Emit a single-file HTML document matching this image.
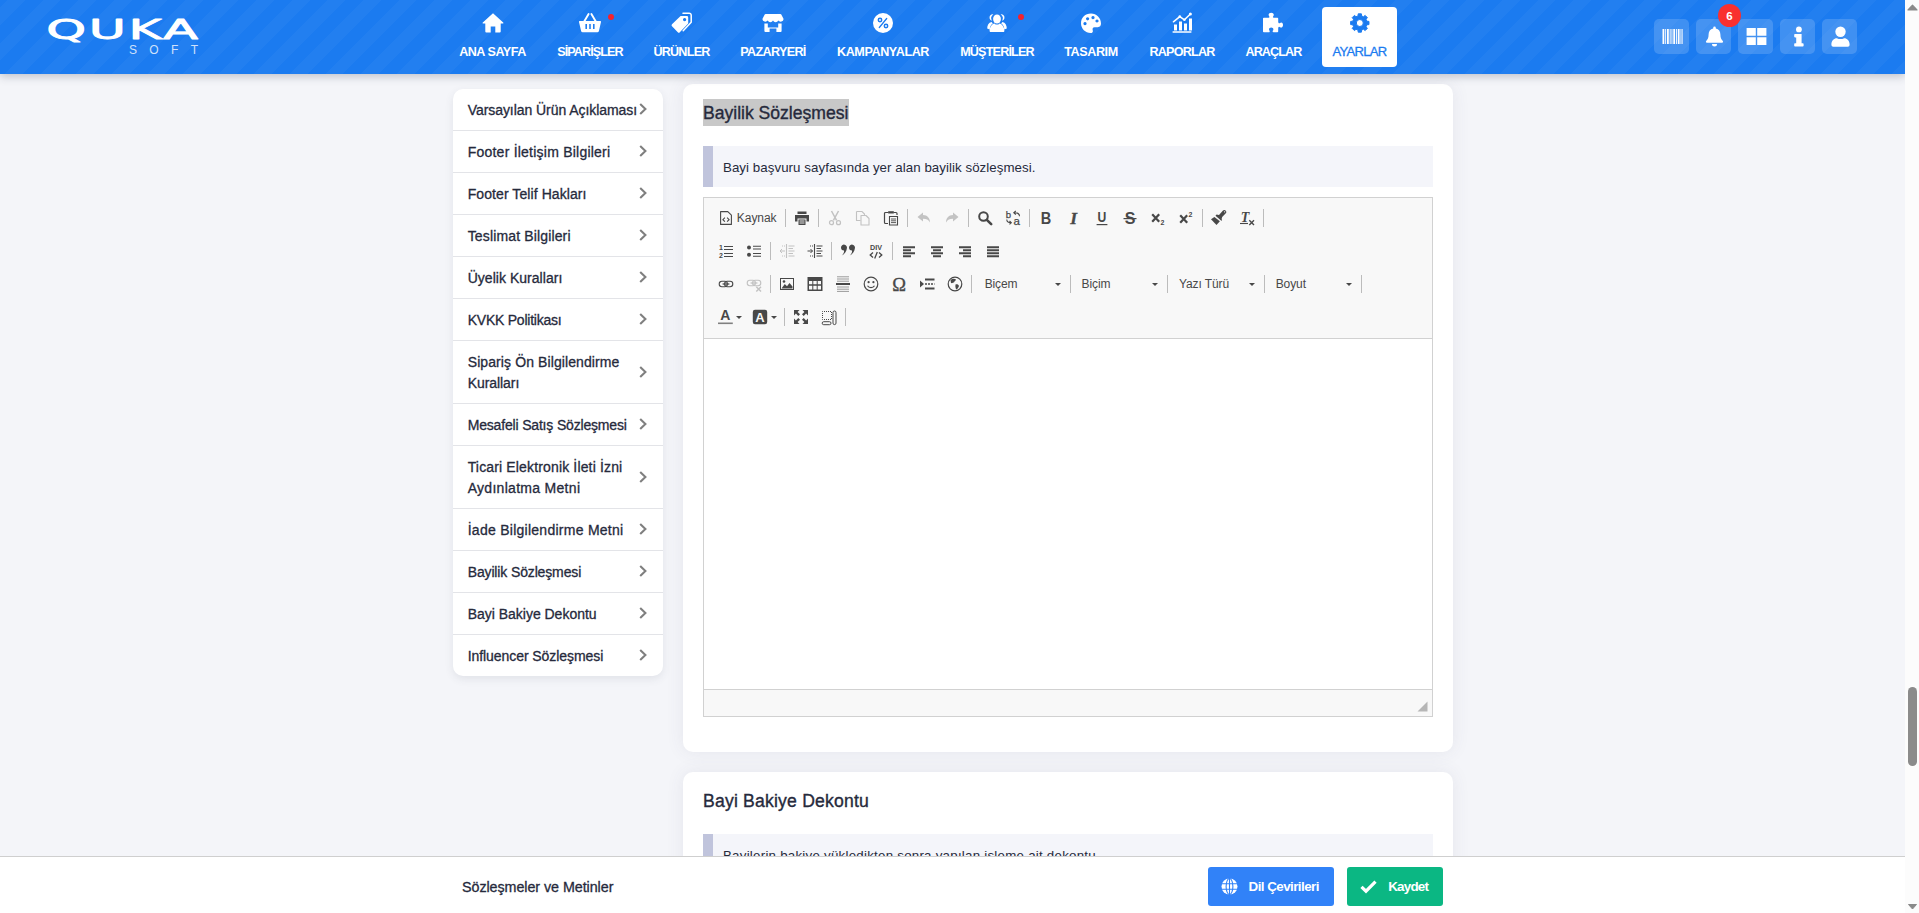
<!DOCTYPE html>
<html lang="tr">
<head>
<meta charset="utf-8">
<title>Sözleşmeler ve Metinler</title>
<style>
*{box-sizing:border-box;margin:0;padding:0}
html,body{width:1919px;height:913px;overflow:hidden}
body{background:#f4f5f9;font-family:"Liberation Sans",sans-serif;color:#262a3c;position:relative}
#page{position:absolute;left:0;top:0;width:1919px;height:913px;overflow:hidden}
.abs{position:absolute}
/* header */
#hdr{position:absolute;left:0;top:0;width:1905px;height:74px;background-color:#1b7bf0;
 background-image:repeating-linear-gradient(135deg,rgba(255,255,255,0) 0,rgba(255,255,255,0) 5.300px,rgba(255,255,255,0.032) 5.300px,rgba(255,255,255,0.032) 17.900px,rgba(255,255,255,0) 17.900px,rgba(255,255,255,0) 25.170px);
 box-shadow:0 2px 9px rgba(40,45,70,0.28)}
.nav{position:absolute;top:7px;height:60px;border-radius:4px;color:#fff;text-align:center}
.nav svg{position:absolute;left:50%;top:4px;margin-left:-12px;width:24px;height:24px;fill:#fff}
.nav span{position:absolute;left:-20px;right:-20px;top:37px;font-size:12.6px;line-height:16px;font-weight:bold;letter-spacing:-0.35px;white-space:nowrap}
.nav.act{background:#fff;color:#1b7bf0}
.nav.act svg{fill:#1b7bf0}
.dot{position:absolute;width:6px;height:6px;border-radius:3px;background:#f5222d}
.rb{position:absolute;top:19px;width:35px;height:35px;border-radius:5px;background:rgba(255,255,255,0.16)}
.rb svg{position:absolute;left:7.700px;top:7.300px;width:21px;height:21px;fill:#fff}
/* sidebar */
#side{position:absolute;left:453px;top:89px;width:210px;background:#fff;border-radius:10px;box-shadow:0 3px 8px rgba(60,65,90,0.10);overflow:hidden}
.si{position:relative;padding:11px 30px 9px 14.700px;font-size:14px;line-height:21px;border-bottom:1px solid #e3e4e8;white-space:nowrap;-webkit-text-stroke:0.3px #262a3c}
.si:last-child{border-bottom:0}
.si svg{position:absolute;right:16.300px;top:50%;margin-top:-6.500px;width:8px;height:12px;fill:none;stroke:#808080;stroke-width:2.100}
/* cards */
.card{position:absolute;left:683px;width:770px;background:#fff;border-radius:10px;box-shadow:0 0 18px rgba(70,65,100,0.085)}
.ttl{position:absolute;left:703px;font-size:17.6px;line-height:27px;height:27px;white-space:nowrap;-webkit-text-stroke:0.35px #262a3c;color:#262a3c}
.info{position:absolute;left:703px;width:730px;height:41px;background:#f4f5fa;border-left:10px solid #c0c4dc;font-size:13.300px;line-height:43px;padding-left:10px;overflow:hidden;white-space:nowrap;color:#262a3c}
.ti{position:absolute;width:16px;height:16px;overflow:visible}
.ti.dis{opacity:0.3}
.tsep{position:absolute;width:1px;height:18px;background:#bcbcbc}
.tarr{position:absolute;width:0;height:0;border-left:3px solid transparent;border-right:3px solid transparent;border-top:3px solid #484848}
.tlbl{position:absolute;font-size:12px;line-height:16px;color:#484848;white-space:nowrap}
/* footer */
#foot{position:absolute;left:0;top:856px;width:1905px;height:57px;background:#fff;border-top:1px solid #cfcfcf}
.btn{position:absolute;top:10px;height:39px;border-radius:3px;color:#fff;font-size:13.4px;font-weight:bold;line-height:40px;white-space:nowrap;letter-spacing:-0.300px}
/* scrollbar */
#sb{position:absolute;left:1905px;top:0;width:14px;height:913px;background:#fcfcfc}
</style>
</head>
<body>
<div id="page">

<!-- CARDS -->
<div class="card" style="top:84px;height:668px"></div>
<div class="card" style="top:772px;height:140px"></div>

<!--MAIN-->
<div class="abs" style="left:703px;top:99px;width:146px;height:27px;background:#c8c8c8"></div>
<div class="ttl" style="top:100px"><span style="letter-spacing:-0.017px">Bayilik Sözleşmesi</span></div>
<div class="info" style="top:146px"><span style="letter-spacing:0.055px">Bayi başvuru sayfasında yer alan bayilik sözleşmesi.</span></div>

<div id="ed" class="abs" style="left:703px;top:197px;width:730px;height:520px;border:1px solid #d1d1d1;background:#fff">
 <div id="tb" class="abs" style="left:0;top:0;width:728px;height:141px;background:#f8f8f8;border-bottom:1px solid #d1d1d1">
<!--TOOLBAR-->
<svg class="ti" style="left:14px;top:12px" viewBox="0 0 16 16"><path d="M2.600 1.600 h7.200 l3.600 3.600 v9.200 h-10.800 Z" fill="none" stroke="#484848" stroke-width="1.100" stroke-linejoin="round"/><path d="M6.900 7.700 l-2 2 l2 2 M9.100 7.700 l2 2 l-2 2" fill="none" stroke="#484848" stroke-width="1.100"/></svg>
<span class="tlbl" style="left:32.8px;top:12px"><span style="letter-spacing:-0.046px">Kaynak</span></span>
<i class="tsep" style="left:81px;top:11px"></i>
<svg class="ti" style="left:90px;top:12px" viewBox="0 0 16 16"><path d="M3.500 1.500 h9 v2.500 h-9 Z M1 5 h14 v6.500 h-2.500 v-3 h-9 v3 H1 Z M4.500 9.500 h7 v5.500 h-7 Z" fill="#484848"/><path d="M5.500 11 h5 M5.500 13 h5" stroke="#f8f8f8" stroke-width="0.900"/></svg>
<i class="tsep" style="left:114px;top:11px"></i>
<svg class="ti dis" style="left:123px;top:12px" viewBox="0 0 16 16"><path d="M4.500 1 L9.600 10.400 M11.500 1 L6.400 10.400" stroke="#484848" stroke-width="1.500" fill="none"/><circle cx="4.500" cy="12.700" r="2" fill="none" stroke="#484848" stroke-width="1.200"/><circle cx="11.500" cy="12.700" r="2" fill="none" stroke="#484848" stroke-width="1.200"/></svg>
<svg class="ti dis" style="left:151px;top:12px" viewBox="0 0 16 16"><path d="M1.500 1.500 h5.500 l2.500 2.500 v1 M1.500 1.500 v9 h4" fill="none" stroke="#484848" stroke-width="1.100"/><path d="M6 5.500 h5 l3 3 v6.500 h-8 Z" fill="none" stroke="#484848" stroke-width="1.100" stroke-linejoin="round"/></svg>
<svg class="ti" style="left:179px;top:12px" viewBox="0 0 16 16"><path d="M5.500 2.500 h-3 a1 1 0 0 0 -1 1 v9 a1 1 0 0 0 1 1 h2.500 M10.500 2.500 h2.500 a1 1 0 0 1 1 1 v1.500" fill="none" stroke="#484848" stroke-width="1.200"/><path d="M5.200 1.200 h5.600 v2.300 h-5.600 Z" fill="#484848"/><path d="M6.500 6.500 h8 v8.500 h-8 Z" fill="none" stroke="#484848" stroke-width="1.100"/><path d="M8 9 h5 M8 10.800 h5 M8 12.600 h5" stroke="#484848" stroke-width="0.900"/></svg>
<i class="tsep" style="left:203px;top:11px"></i>
<svg class="ti dis" style="left:212px;top:12px" viewBox="0 0 16 16"><path d="M7 2.500 L1.500 7 L7 11.500 V8.800 c3.500 0 5.500 1 7 3.700 c0 -4.500 -2.500 -7.300 -7 -7.500 Z" fill="#484848"/></svg>
<svg class="ti dis" style="left:240px;top:12px" viewBox="0 0 16 16"><path d="M9 2.500 L14.500 7 L9 11.500 V8.800 c-3.500 0 -5.500 1 -7 3.700 c0 -4.500 2.500 -7.300 7 -7.500 Z" fill="#484848"/></svg>
<i class="tsep" style="left:264px;top:11px"></i>
<svg class="ti" style="left:273px;top:12px" viewBox="0 0 16 16"><circle cx="6.500" cy="6.500" r="4.300" fill="none" stroke="#484848" stroke-width="2"/><path d="M9.800 9.800 L14.200 14.200" stroke="#484848" stroke-width="2.600" stroke-linecap="round"/></svg>
<svg class="ti" style="left:301px;top:12px" viewBox="0 0 16 16"><text x="0.800" y="7.500" font-family="Liberation Sans,sans-serif" font-size="9.500" fill="#484848" stroke="#484848" stroke-width="0.250">b</text><text x="8.500" y="15.300" font-family="Liberation Sans,sans-serif" font-size="11.500" fill="#484848" stroke="#484848" stroke-width="0.250">a</text><path d="M14.500 6.200 c0 -2.500 -1.500 -3.400 -5.500 -3.400 M10.800 1 l-2 1.800 l2 1.800 M1.800 9.500 c0 2.500 1 3.200 4.200 3.200 M4.500 11 l1.800 1.700 l-1.800 1.700" fill="none" stroke="#484848" stroke-width="1.100"/></svg>
<i class="tsep" style="left:325px;top:11px"></i>
<svg class="ti" style="left:334px;top:12px" viewBox="0 0 16 16"><text x="0" y="0" transform="translate(8,14) scale(0.880,1)" text-anchor="middle" font-family="Liberation Sans,sans-serif" font-size="16.500" font-weight="bold" fill="#484848">B</text></svg>
<svg class="ti" style="left:362px;top:12px" viewBox="0 0 16 16"><text x="7.600" y="14" text-anchor="middle" font-family="Liberation Serif,serif" font-size="17.500" font-weight="bold" font-style="italic" fill="#484848" stroke="#484848" stroke-width="0.300">I</text></svg>
<svg class="ti" style="left:390px;top:12px" viewBox="0 0 16 16"><text x="0" y="0" transform="translate(8,12.300) scale(0.900,1.100)" text-anchor="middle" font-family="Liberation Sans,sans-serif" font-size="13.500" font-weight="bold" fill="#484848">U</text><path d="M2.600 14.600 h10.800" stroke="#484848" stroke-width="1.200"/></svg>
<svg class="ti" style="left:418px;top:12px" viewBox="0 0 16 16"><text x="8" y="14" text-anchor="middle" font-family="Liberation Sans,sans-serif" font-size="16" font-weight="bold" fill="#484848">S</text><path d="M1.500 8.600 h13" stroke="#484848" stroke-width="1.200"/></svg>
<svg class="ti" style="left:446px;top:12px" viewBox="0 0 16 16"><path d="M2.200 4.200 L9.200 11.800 M9.200 4.200 L2.200 11.800" stroke="#484848" stroke-width="2.200"/><text x="10.500" y="15.200" font-family="Liberation Sans,sans-serif" font-size="7" font-weight="bold" fill="#484848">2</text></svg>
<svg class="ti" style="left:474px;top:12px" viewBox="0 0 16 16"><path d="M2.200 5.200 L9.200 12.800 M9.200 5.200 L2.200 12.800" stroke="#484848" stroke-width="2.200"/><text x="10.500" y="7" font-family="Liberation Sans,sans-serif" font-size="7" font-weight="bold" fill="#484848">2</text></svg>
<i class="tsep" style="left:498px;top:11px"></i>
<svg class="ti" style="left:507px;top:12px" viewBox="0 0 16 16"><path d="M0 9.300 L3.400 7 L8.900 11.200 L5.500 14.900 Z" fill="#484848"/><path d="M4.500 5.800 L5.600 4.600 L8 5 L12 0.600 Q13.500 -0.600 15 1 Q15.900 2.200 14.800 3.300 L11.200 7 L10.600 9 L11.100 10.300 L10.300 10.800 Z" fill="#484848"/><circle cx="13.600" cy="1.800" r="0.650" fill="#f8f8f8"/></svg>
<svg class="ti" style="left:535px;top:12px" viewBox="0 0 16 16"><text x="6" y="11.500" text-anchor="middle" font-family="Liberation Serif,serif" font-size="14" font-weight="bold" font-style="italic" fill="#484848">T</text><path d="M1 13.500 h8" stroke="#484848" stroke-width="1.100"/><path d="M10.300 10.300 L15 15 M15 10.300 L10.300 15" stroke="#484848" stroke-width="1.400"/></svg>
<i class="tsep" style="left:559px;top:11px"></i>
<svg class="ti" style="left:14px;top:45px" viewBox="0 0 16 16"><path d="M6 3.500 h9 M6 6.500 h9 M6 10.500 h9 M6 13.500 h9" stroke="#484848" stroke-width="1.100"/><text x="1" y="7.200" font-family="Liberation Sans,sans-serif" font-size="7" font-weight="bold" fill="#484848">1</text><text x="1" y="15" font-family="Liberation Sans,sans-serif" font-size="7" font-weight="bold" fill="#484848">2</text></svg>
<svg class="ti" style="left:42px;top:45px" viewBox="0 0 16 16"><circle cx="3" cy="4.500" r="2" fill="#484848"/><circle cx="3" cy="11.800" r="2" fill="#484848"/><path d="M7 3.300 h8 M7 6 h8 M7 10.500 h8 M7 13.200 h8" stroke="#484848" stroke-width="1.100"/></svg>
<i class="tsep" style="left:66px;top:44px"></i>
<svg class="ti dis" style="left:75px;top:45px" viewBox="0 0 16 16"><path d="M7.500 1 v14" stroke="#484848" stroke-width="1.100"/><path d="M9.500 3 h6 M9.500 5.500 h4.500 M9.500 8 h6 M9.500 10.500 h4.500 M9.500 13 h6" stroke="#484848" stroke-width="1"/><path d="M6 8 h-5 M3 6 l-2 2 l2 2" fill="none" stroke="#484848" stroke-width="1"/><path d="M3 3 h3 M3 13 h3" stroke="#484848" stroke-width="1" stroke-dasharray="1 1"/></svg>
<svg class="ti" style="left:103px;top:45px" viewBox="0 0 16 16"><path d="M7.500 1 v14" stroke="#484848" stroke-width="1.100"/><path d="M9.500 3 h6 M9.500 5.500 h4.500 M9.500 8 h6 M9.500 10.500 h4.500 M9.500 13 h6" stroke="#484848" stroke-width="1"/><path d="M0.500 8 h5 M3.500 6 l2 2 l-2 2" fill="none" stroke="#484848" stroke-width="1"/><path d="M3 3 h3 M3 13 h3" stroke="#484848" stroke-width="1" stroke-dasharray="1 1"/></svg>
<i class="tsep" style="left:127px;top:44px"></i>
<svg class="ti" style="left:136px;top:45px" viewBox="0 0 16 16"><path d="M1 4.500 a3 3 0 1 1 5.800 1.200 c-0.400 2.800 -2 5.200 -5 6.800 c1.800 -1.800 2.500 -3.400 2.200 -5 a3 3 0 0 1 -3 -3 Z" fill="#484848"/><path d="M9 4.500 a3 3 0 1 1 5.800 1.200 c-0.400 2.800 -2 5.200 -5 6.800 c1.800 -1.800 2.500 -3.400 2.200 -5 a3 3 0 0 1 -3 -3 Z" fill="#484848"/></svg>
<svg class="ti" style="left:164px;top:45px" viewBox="0 0 16 16"><text x="8" y="7" text-anchor="middle" font-family="Liberation Sans,sans-serif" font-size="8" font-weight="bold" fill="#484848" textLength="12" lengthAdjust="spacingAndGlyphs">DIV</text><path d="M5 9.500 l-2.800 2.500 l2.800 2.500 M11 9.500 l2.800 2.500 l-2.800 2.500 M9.300 9 l-2.600 6.500" fill="none" stroke="#484848" stroke-width="1.300"/></svg>
<i class="tsep" style="left:188px;top:44px"></i>
<svg class="ti" style="left:197px;top:45px" viewBox="0 0 16 16"><path d="M2.0 4.2 h12.0 M2.0 7.2 h8.0 M2.0 10.2 h12.0 M2.0 13.2 h8.0 " stroke="#484848" stroke-width="1.900"/></svg>
<svg class="ti" style="left:225px;top:45px" viewBox="0 0 16 16"><path d="M2.0 4.2 h12.0 M4.0 7.2 h8.0 M2.0 10.2 h12.0 M4.0 13.2 h8.0 " stroke="#484848" stroke-width="1.900"/></svg>
<svg class="ti" style="left:253px;top:45px" viewBox="0 0 16 16"><path d="M2.0 4.2 h12.0 M6.0 7.2 h8.0 M2.0 10.2 h12.0 M6.0 13.2 h8.0 " stroke="#484848" stroke-width="1.900"/></svg>
<svg class="ti" style="left:281px;top:45px" viewBox="0 0 16 16"><path d="M2.0 4.2 h12.0 M2.0 7.2 h12.0 M2.0 10.2 h12.0 M2.0 13.2 h12.0 " stroke="#484848" stroke-width="1.900"/></svg>
<svg class="ti" style="left:14px;top:78px" viewBox="0 0 16 16"><rect x="1.200" y="5.300" width="8.200" height="5.400" rx="2.700" fill="none" stroke="#484848" stroke-width="1.100"/><rect x="6.600" y="5.300" width="8.200" height="5.400" rx="2.700" fill="none" stroke="#484848" stroke-width="1.100"/><path d="M4.600 8 h6.800" stroke="#484848" stroke-width="1.300"/></svg>
<svg class="ti dis" style="left:42px;top:78px" viewBox="0 0 16 16"><rect x="1.200" y="4.300" width="8.200" height="5.400" rx="2.700" fill="none" stroke="#484848" stroke-width="1.100"/><rect x="6.600" y="4.300" width="8.200" height="5.400" rx="2.700" fill="none" stroke="#484848" stroke-width="1.100"/><path d="M4.600 7 h6.800" stroke="#484848" stroke-width="1.300"/><path d="M10.300 10.800 l4.700 4.700 M15 10.800 l-4.700 4.700" stroke="#484848" stroke-width="1.400"/></svg>
<i class="tsep" style="left:66px;top:77px"></i>
<svg class="ti" style="left:75px;top:78px" viewBox="0 0 16 16"><rect x="1.500" y="2.500" width="13" height="11" fill="none" stroke="#484848" stroke-width="1"/><path d="M2.500 12.500 L5.800 8 L8 10.300 L10.500 7 L13.500 10.500 V12.500 Z" fill="#484848"/><circle cx="5" cy="5.500" r="1.300" fill="#484848"/></svg>
<svg class="ti" style="left:103px;top:78px" viewBox="0 0 16 16"><path d="M0.500 1 h15 v14 h-15 Z" fill="#484848"/><path d="M2 5 h3.300 v3.300 H2 Z M6.300 5 h3.400 v3.300 H6.300 Z M10.700 5 H14 v3.300 h-3.300 Z M2 9.700 h3.300 V13.500 H2 Z M6.300 9.700 h3.400 V13.500 H6.300 Z M10.700 9.700 H14 V13.500 h-3.300 Z" fill="#f8f8f8"/></svg>
<svg class="ti" style="left:131px;top:78px" viewBox="0 0 16 16"><path d="M2 0.800 h12 M2 3 h12 M2 5.200 h12 M2 11 h12 M2 13.200 h12 M2 15.400 h12" stroke="#484848" stroke-width="0.700" opacity="0.750"/><path d="M1 8 h14" stroke="#484848" stroke-width="2"/></svg>
<svg class="ti" style="left:159px;top:78px" viewBox="0 0 16 16"><circle cx="8" cy="8" r="6.800" fill="none" stroke="#484848" stroke-width="1.200"/><circle cx="5.600" cy="6.200" r="1.100" fill="#484848"/><circle cx="10.400" cy="6.200" r="1.100" fill="#484848"/><path d="M4.500 9.800 c1.500 2.400 5.500 2.400 7 0" fill="none" stroke="#484848" stroke-width="1.200"/></svg>
<svg class="ti" style="left:187px;top:78px" viewBox="0 0 16 16"><text x="8" y="14.600" text-anchor="middle" font-family="Liberation Serif,serif" font-size="18.500" fill="#484848" stroke="#484848" stroke-width="0.350">Ω</text></svg>
<svg class="ti" style="left:215px;top:78px" viewBox="0 0 16 16"><path d="M1 4.500 L5 8 L1 11.500 Z" fill="#484848"/><path d="M6 3.500 h9.500 M6 12.500 h9.500" stroke="#484848" stroke-width="1.900"/><path d="M6 8 h9.500" stroke="#484848" stroke-width="1.700" stroke-dasharray="2 1"/></svg>
<svg class="ti" style="left:243px;top:78px" viewBox="0 0 16 16"><circle cx="8" cy="8" r="6.800" fill="none" stroke="#484848" stroke-width="1.200"/><path d="M3.500 4 c2 -1.500 4 -1.500 5.500 -0.500 c-0.500 1.500 -1.500 1.500 -2 3 c-1 0 -1.500 1 -3 0.500 Z M8.500 8.500 c1.500 -0.500 3 0 3.500 1.500 c-0.500 1.500 -1.500 3 -3 3.500 c0 -1.500 -1 -2.500 -0.500 -5 Z" fill="#484848"/></svg>
<i class="tsep" style="left:267px;top:77px"></i>
<span class="tlbl" style="left:280.8px;top:78px"><span style="letter-spacing:-0.186px">Biçem</span></span>
<i class="tarr" style="left:351px;top:85px"></i>
<i class="tsep" style="left:366px;top:77px"></i>
<span class="tlbl" style="left:377.5px;top:78px"><span style="letter-spacing:-0.061px">Biçim</span></span>
<i class="tarr" style="left:448px;top:85px"></i>
<i class="tsep" style="left:463px;top:77px"></i>
<span class="tlbl" style="left:474.9px;top:78px"><span style="letter-spacing:-0.090px">Yazı Türü</span></span>
<i class="tarr" style="left:545px;top:85px"></i>
<i class="tsep" style="left:560px;top:77px"></i>
<span class="tlbl" style="left:571.7px;top:78px"><span style="letter-spacing:-0.097px">Boyut</span></span>
<i class="tarr" style="left:642px;top:85px"></i>
<i class="tsep" style="left:657px;top:77px"></i>
<svg class="ti" style="left:14px;top:111px" viewBox="0 0 16 16"><text x="7.300" y="11.300" text-anchor="middle" font-family="Liberation Sans,sans-serif" font-size="14" font-weight="bold" fill="#484848">A</text><path d="M0 14.300 h14.800" stroke="#808080" stroke-width="1.600"/></svg>
<i class="tarr" style="left:32px;top:118px"></i>
<svg class="ti" style="left:48px;top:111px" viewBox="0 0 16 16"><rect x="0.800" y="0.800" width="14.400" height="14.400" rx="2.200" fill="#484848"/><text x="8" y="13" text-anchor="middle" font-family="Liberation Sans,sans-serif" font-size="13" font-weight="bold" fill="#f8f8f8">A</text></svg>
<i class="tarr" style="left:67px;top:118px"></i>
<i class="tsep" style="left:80px;top:110px"></i>
<svg class="ti" style="left:89px;top:111px" viewBox="0 0 16 16"><path d="M1 1 h5.500 l-1.900 1.900 l2.400 2.400 l-1.700 1.700 l-2.400 -2.400 L1 6.500 Z M15 1 v5.500 l-1.900 -1.900 l-2.400 2.400 l-1.700 -1.700 l2.400 -2.400 L9.500 1 Z M1 15 v-5.500 l1.900 1.900 l2.400 -2.400 l1.700 1.700 l-2.400 2.400 L6.500 15 Z M15 15 h-5.500 l1.900 -1.900 l-2.400 -2.400 l1.700 -1.700 l2.400 2.400 L15 9.500 Z" fill="#484848"/></svg>
<svg class="ti" style="left:117px;top:111px" viewBox="0 0 16 16"><path d="M1.500 2.500 h9 v8 h-9 Z" fill="none" stroke="#484848" stroke-width="1" stroke-dasharray="1 1" stroke-dashoffset="0.500"/><rect x="12" y="2" width="3" height="13.600" rx="1.500" fill="none" stroke="#484848" stroke-width="1"/><rect x="1.200" y="12.700" width="8.800" height="3" rx="1.500" fill="none" stroke="#484848" stroke-width="1"/></svg>
<i class="tsep" style="left:141px;top:110px"></i>
<!--/TOOLBAR-->
 </div>
 <div class="abs" style="left:0;top:491px;width:728px;height:27px;background:#f8f8f8;border-top:1px solid #d1d1d1">
  <svg class="abs" style="left:713px;top:11px" width="11" height="11" viewBox="0 0 11 11"><path d="M10.500 0.500 V10.500 H0.500 Z" fill="#b6b6b6"/></svg>
 </div>
</div>

<div class="ttl" style="top:788px"><span style="letter-spacing:0.198px">Bayi Bakiye Dekontu</span></div>
<div class="info" style="top:834px"><span style="letter-spacing:0.249px">Bayilerin bakiye yükledikten sonra yapılan işleme ait dekontu.</span></div>
<!--/MAIN-->

<!--SIDE-->
<div id="side">
<div class="si"><span style="letter-spacing:-0.061px">Varsayılan Ürün Açıklaması</span><svg viewBox="0 0 8 12"><path d="M1.2 1 L6.4 6 L1.2 11"/></svg></div>
<div class="si"><span style="letter-spacing:0.228px">Footer İletişim Bilgileri</span><svg viewBox="0 0 8 12"><path d="M1.2 1 L6.4 6 L1.2 11"/></svg></div>
<div class="si"><span style="letter-spacing:0.082px">Footer Telif Hakları</span><svg viewBox="0 0 8 12"><path d="M1.2 1 L6.4 6 L1.2 11"/></svg></div>
<div class="si"><span style="letter-spacing:0.144px">Teslimat Bilgileri</span><svg viewBox="0 0 8 12"><path d="M1.2 1 L6.4 6 L1.2 11"/></svg></div>
<div class="si"><span style="letter-spacing:0.031px">Üyelik Kuralları</span><svg viewBox="0 0 8 12"><path d="M1.2 1 L6.4 6 L1.2 11"/></svg></div>
<div class="si"><span style="letter-spacing:-0.233px">KVKK Politikası</span><svg viewBox="0 0 8 12"><path d="M1.2 1 L6.4 6 L1.2 11"/></svg></div>
<div class="si"><span style="letter-spacing:0.100px">Sipariş Ön Bilgilendirme</span><br><span style="letter-spacing:-0.068px">Kuralları</span><svg viewBox="0 0 8 12"><path d="M1.2 1 L6.4 6 L1.2 11"/></svg></div>
<div class="si"><span style="letter-spacing:-0.175px">Mesafeli Satış Sözleşmesi</span><svg viewBox="0 0 8 12"><path d="M1.2 1 L6.4 6 L1.2 11"/></svg></div>
<div class="si"><span style="letter-spacing:0.151px">Ticari Elektronik İleti İzni</span><br><span style="letter-spacing:0.293px">Aydınlatma Metni</span><svg viewBox="0 0 8 12"><path d="M1.2 1 L6.4 6 L1.2 11"/></svg></div>
<div class="si"><span style="letter-spacing:0.265px">İade Bilgilendirme Metni</span><svg viewBox="0 0 8 12"><path d="M1.2 1 L6.4 6 L1.2 11"/></svg></div>
<div class="si"><span style="letter-spacing:-0.138px">Bayilik Sözleşmesi</span><svg viewBox="0 0 8 12"><path d="M1.2 1 L6.4 6 L1.2 11"/></svg></div>
<div class="si"><span style="letter-spacing:-0.016px">Bayi Bakiye Dekontu</span><svg viewBox="0 0 8 12"><path d="M1.2 1 L6.4 6 L1.2 11"/></svg></div>
<div class="si"><span style="letter-spacing:-0.068px">Influencer Sözleşmesi</span><svg viewBox="0 0 8 12"><path d="M1.2 1 L6.4 6 L1.2 11"/></svg></div>
</div>
<!--/SIDE-->

<!--HEADER-->
<div id="hdr">
 <!-- logo -->
 <svg class="abs" style="left:44px;top:14px" width="160" height="46" viewBox="0 0 160 46">
  <g transform="translate(2.300,24.800) scale(1.950,1)"><text x="0" y="0" font-family="'DejaVu Sans','Liberation Sans',sans-serif" font-size="26" fill="#fff" stroke="#fff" stroke-width="0.800" stroke-linejoin="round" textLength="77.800" lengthAdjust="spacing">QUKA</text></g>
  <text x="84.900" y="40" font-family="'Liberation Sans',sans-serif" font-size="12" fill="#cfe1fb" textLength="69.300" lengthAdjust="spacing">SOFT</text>
 </svg>

 <div class="nav" style="left:449px;width:87px"><svg viewBox="0 0 24 24"><path d="M12 2.200 L1.800 11.400 a0.700 0.700 0 0 0 0.500 1.200 H4.300 V20.600 a1 1 0 0 0 1 1 H9.700 V15.400 h4.600 v6.200 h4.400 a1 1 0 0 0 1-1 V12.600 h2 a0.700 0.700 0 0 0 0.500-1.200 Z"/></svg><span><b style="letter-spacing:-0.495px">ANA SAYFA</b></span></div>

 <div class="nav" style="left:547px;width:86px"><svg viewBox="0 0 24 24"><path fill-rule="evenodd" d="M1.8 10 h20.4 a0.8 0.8 0 0 1 0.8 1 l-2.1 9 a1.6 1.6 0 0 1-1.6 1.2 H4.7 a1.6 1.6 0 0 1-1.6-1.2 L1 11 a0.8 0.8 0 0 1 0.8-1 Z M7.4 13 v5 h1.6 v-5 Z M11.2 13 v5 h1.6 v-5 Z M15 13 v5 h1.6 v-5 Z"/><path d="M6.2 10.4 L10.6 3 M17.8 10.4 L13.4 3" stroke="#fff" stroke-width="1.9" stroke-linecap="round" fill="none"/></svg><span><b style="letter-spacing:-0.905px">SİPARİŞLER</b></span><i class="dot" style="left:61px;top:7px"></i></div>

 <div class="nav" style="left:643px;width:77px"><svg viewBox="0 0 24 24"><path fill-rule="evenodd" d="M2 11.2 L10.6 3 h6.2 a1.4 1.4 0 0 1 1.4 1.4 v6.2 L9.8 19.2 a1.4 1.4 0 0 1-2 0 L2 13.2 a1.4 1.4 0 0 1 0-2 Z M14.6 5 a1.6 1.6 0 1 0 0.01 0 Z" transform="translate(0,2)"/><path d="M13 2.2 h6.2 a2 2 0 0 1 2 2 v7 l-8 8.6" stroke="#fff" stroke-width="1.5" fill="none" stroke-linecap="round" stroke-linejoin="round"/></svg><span><b style="letter-spacing:-0.763px">ÜRÜNLER</b></span></div>

 <div class="nav" style="left:730px;width:86px"><svg viewBox="0 0 24 24"><path d="M4.6 3 h14.8 a1 1 0 0 1 0.9 0.6 L22.6 8 a3 3 0 0 1-5.3 1.6 a3 3 0 0 1-5.3 0 a3 3 0 0 1-5.3 0 A3 3 0 0 1 1.4 8 L3.7 3.6 A1 1 0 0 1 4.6 3 Z"/><path d="M3.4 12.4 h3.4 v4 h10.4 v-4 h3.4 V20 a1 1 0 0 1-1 1 H15.4 v-3.4 H8.6 V21 H4.4 a1 1 0 0 1-1-1 Z"/></svg><span><b style="letter-spacing:-0.672px">PAZARYERİ</b></span></div>

 <div class="nav" style="left:827px;width:112px"><svg viewBox="0 0 24 24"><circle cx="12" cy="12" r="10"/><g fill="none" stroke="#1b7bf0" stroke-width="1.5"><circle cx="9" cy="9" r="1.7"/><circle cx="15" cy="15" r="1.7"/><path d="M15.6 7.6 L8.4 16.4" stroke-linecap="round"/></g></svg><span><b style="letter-spacing:-0.406px">KAMPANYALAR</b></span></div>

 <div class="nav" style="left:950px;width:94px"><svg viewBox="0 0 24 24"><path d="M5.4 4.2 a3.6 4 0 0 1 3-1 a5 5 0 0 0-1.4 6.6 a3.4 3.4 0 0 1-1.6-5.6 Z M18.6 4.2 a3.6 4 0 0 0-3-1 a5 5 0 0 1 1.4 6.6 a3.4 3.4 0 0 0 1.6-5.6 Z"/><path d="M2.2 17.6 c0-3.4 1.4-6 4.4-6.6 l1.2 1.6 c-2 1.2-3 3.2-3 6 Z M21.8 17.6 c0-3.4-1.4-6-4.4-6.600 l-1.2 1.6 c2 1.2 3 3.200 3 6 Z"/><ellipse cx="12" cy="8" rx="3.9" ry="4.6"/><path d="M5.8 21 c-0.800 0-1.200-0.400-1.200-1.200 c0-4 2.400-6.800 4.800-7.400 c0.800 0.800 1.700 1.200 2.600 1.200 s1.800-0.400 2.600-1.200 c2.400 0.600 4.800 3.400 4.800 7.400 c0 0.800-0.400 1.200-1.200 1.200 Z"/></svg><span><b style="letter-spacing:-0.818px">MÜŞTERİLER</b></span><i class="dot" style="left:68px;top:7px"></i></div>

 <div class="nav" style="left:1054px;width:74px"><svg viewBox="0 0 24 24"><path fill-rule="evenodd" d="M12 2.200 C6.200 2.200 2 6.400 2 11.800 c0 5.400 4.400 9.800 9.600 9.800 c1.800 0 2.600-1.200 2.200-2.600 c-0.500-1.600-0.200-3 1.800-3.200 h3.200 c2 0 3.200-1.400 3.200-3.600 C22 6.600 17.600 2.200 12 2.200 Z M6 10.600 a1.600 1.600 0 1 0 0.010 0 Z M8.600 5.800 a1.600 1.600 0 1 0 0.010 0 Z M14 4.600 a1.600 1.600 0 1 0 0.010 0 Z M18 8 a1.600 1.600 0 1 0 0.010 0 Z" transform="translate(0,0.400)"/></svg><span><b style="letter-spacing:-0.406px">TASARIM</b></span></div>

 <div class="nav" style="left:1139px;width:86px"><svg viewBox="0 0 24 24"><path d="M2.600 20.200 h18.800 v1.600 H2.600 Z M4 13.600 h3 v6 h-3 Z M9 10.400 h3 v9.200 h-3 Z M14 12.400 h3 v7.200 h-3 Z M19 7.600 h3 v12 h-3 Z"/><path d="M3.400 10.800 L9.800 5.600 l4.600 3.200 L20.400 3" stroke="#fff" stroke-width="1.500" fill="none" stroke-linecap="round" stroke-linejoin="round"/><circle cx="20.400" cy="3" r="1.500"/><circle cx="9.800" cy="5.600" r="1.300"/><circle cx="14.400" cy="8.800" r="1.300"/></svg><span><b style="letter-spacing:-0.768px">RAPORLAR</b></span></div>

 <div class="nav" style="left:1235px;width:77px"><svg viewBox="0 0 24 24" style="margin-left:-14px"><path d="M9.400 6.200 c0.300-0.800-0.800-1.200-0.800-2.400 c0-1.200 1.200-2 2.600-2 s2.600 0.800 2.600 2 c0 1.200-1.100 1.600-0.800 2.400 c0.200 0.600 1 0.600 1.800 0.600 h2.600 a0.800 0.800 0 0 1 0.800 0.800 v3 c0 0.800 0.200 1.400 0.800 1.600 c0.800 0.200 1.200-0.800 2.200-0.800 c1.200 0 1.800 1.200 1.800 2.600 s-0.800 2.600-1.800 2.600 c-1.200 0-1.400-1-2.200-0.800 c-0.600 0.200-0.800 0.800-0.800 1.600 v3 a0.800 0.800 0 0 1-0.800 0.800 h-3.400 c-0.800 0-1.200-0.200-1.300-0.800 c-0.200-0.800 0.700-1 0.700-2 c0-1-1-1.800-2.200-1.800 s-2.200 0.800-2.200 1.800 c0 1 0.900 1.200 0.700 2 c-0.100 0.600-0.500 0.800-1.300 0.800 H3.800 a0.800 0.800 0 0 1-0.800-0.800 V7.600 a0.800 0.800 0 0 1 0.800-0.800 h3.800 c0.800 0 1.600 0 1.800-0.600 Z"/></svg><span><b style="letter-spacing:-0.878px">ARAÇLAR</b></span></div>

 <div class="nav act" style="left:1322px;width:75px"><svg viewBox="0 0 24 24"><path fill-rule="evenodd" d="M10.04 4.92 L10.20 2.84 L13.40 2.84 L13.56 4.92 L15.57 5.75 L17.15 4.39 L19.41 6.65 L18.05 8.23 L18.88 10.24 L20.96 10.40 L20.96 13.60 L18.88 13.76 L18.05 15.77 L19.41 17.35 L17.15 19.61 L15.57 18.25 L13.56 19.08 L13.40 21.16 L10.20 21.16 L10.04 19.08 L8.03 18.25 L6.45 19.61 L4.19 17.35 L5.55 15.77 L4.72 13.76 L2.64 13.60 L2.64 10.40 L4.72 10.24 L5.55 8.23 L4.19 6.65 L6.45 4.39 L8.03 5.75Z M8.30 12.00 a3.50 3.50 0 1 0 7.00 0 a3.50 3.50 0 1 0 -7.00 0Z" stroke="#1b7bf0" stroke-width="1" stroke-linejoin="round"/></svg><span style="font-weight:normal;-webkit-text-stroke:0.3px #1b7bf0;letter-spacing:-0.1px;font-size:13px"><b style="letter-spacing:-0.711px;font-weight:normal">AYARLAR</b></span></div>

 <!-- right buttons -->
 <div class="rb" style="left:1654px"><svg viewBox="0 0 21 21"><path d="M0.500 3 h1.800 v15 h-1.800 Z M3.200 3 h0.900 v15 h-0.900 Z M5 3 h1.800 v15 h-1.800 Z M7.700 3 h0.900 v15 h-0.900 Z M9.500 3 h0.900 v15 h-0.900 Z M11.300 3 h1.800 v15 h-1.800 Z M14 3 h0.900 v15 h-0.900 Z M15.800 3 h1.800 v15 h-1.800 Z M18.500 3 h0.900 v15 h-0.900 Z M19.900 3 h0.700 v15 h-0.700 Z"/></svg></div>
 <div class="rb" style="left:1696px"><svg viewBox="0 0 21 21"><path d="M10.500 0.600 a1.300 1.300 0 0 1 1.300 1.300 v0.600 c3 0.600 4.600 3 4.600 6 c0 3.400 1 5 2.400 6.400 c0.600 0.600 0.200 1.800-0.800 1.800 H3 c-1 0-1.400-1.200-0.800-1.800 C3.600 13.500 4.600 11.900 4.600 8.500 c0-3 1.600-5.400 4.600-6 V1.900 a1.300 1.300 0 0 1 1.300-1.300 Z M8 18 h5 a2.500 2.500 0 0 1-5 0 Z"/></svg></div>
 <div class="rb" style="left:1738px"><svg viewBox="0 0 21 21"><path d="M0.600 2 h9.200 v7.800 H0.600 Z M11.200 2 h9.200 v7.800 h-9.200 Z M0.600 11.200 h9.200 v7.800 H0.600 Z M11.200 11.200 h9.200 v7.800 h-9.200 Z"/></svg></div>
 <div class="rb" style="left:1780px"><svg viewBox="0 0 21 21"><circle cx="10.900" cy="3.400" r="2.900"/><path d="M7 8 h6.600 v9.200 h1.200 a0.800 0.800 0 0 1 0.800 0.800 v1.800 a0.800 0.800 0 0 1-0.800 0.800 H7 a0.800 0.800 0 0 1-0.800-0.800 V18 a0.800 0.800 0 0 1 0.800-0.800 h1.200 v-5.800 H7 a0.800 0.800 0 0 1-0.800-0.800 V8.800 A0.800 0.800 0 0 1 7 8 Z"/></svg></div>
 <div class="rb" style="left:1822px"><svg viewBox="0 0 21 21"><circle cx="10.500" cy="5.800" r="5.200"/><path d="M1.400 18.400 c0-3.800 2.600-6.200 5.400-6.200 c1.200 0.600 2.400 0.900 3.700 0.900 s2.500-0.300 3.700-0.900 c2.800 0 5.400 2.400 5.400 6.200 v0.600 a1.800 1.800 0 0 1-1.800 1.800 H3.200 a1.800 1.800 0 0 1-1.800-1.800 Z"/></svg></div>
 <div class="abs" style="left:1718px;top:4px;width:23px;height:23px;border-radius:12px;background:#f9302f;color:#fff;font-size:11.500px;font-weight:bold;line-height:24.500px;text-align:center">6</div>
</div>
<!--/HEADER-->

<!--FOOTER-->
<div id="foot">
 <div class="abs" style="left:462px;top:20px;font-size:14.300px;line-height:20px;white-space:nowrap;-webkit-text-stroke:0.300px #262a3c"><span style="letter-spacing:-0.053px">Sözleşmeler ve Metinler</span></div>
 <div class="btn" style="left:1208px;width:126px;background:#3182f8"><svg class="abs" style="left:13px;top:11px" width="17" height="17" viewBox="0 0 17 17"><circle cx="8.500" cy="8.500" r="8" fill="#fff"/><g fill="none" stroke="#3182f8" stroke-width="1.100"><ellipse cx="8.500" cy="8.500" rx="3.400" ry="8"/><path d="M8.500 0.500 v16 M1 5.800 h15 M1 11.200 h15"/></g></svg><span class="abs" style="left:40.6px;top:0"><span style="letter-spacing:-0.566px">Dil Çevirileri</span></span></div>
 <div class="btn" style="left:1347px;width:96px;background:#0bb783"><svg class="abs" style="left:13px;top:12px" width="17" height="15" viewBox="0 0 17 15"><path d="M1.500 7.800 L6 12.200 L15.500 2.600" fill="none" stroke="#fff" stroke-width="3.200"/></svg><span class="abs" style="left:41.2px;top:0"><span style="letter-spacing:-0.771px">Kaydet</span></span></div>
</div>
<!--/FOOTER-->

<!--SCROLL-->
<div id="sb">
 <svg class="abs" style="left:0;top:0" width="14" height="913" viewBox="0 0 14 913"><path d="M3 10 L7.500 5.200 L12 10 Z" fill="#8a8a8a" stroke="#8a8a8a" stroke-width="1.200" stroke-linejoin="round"/><rect x="3" y="687" width="9" height="79" rx="4.500" fill="#8b8b8b"/><path d="M3.500 904.500 L11.500 904.500 L7.500 909 Z" fill="#8a8a8a" stroke="#8a8a8a" stroke-width="1" stroke-linejoin="round"/></svg>
</div>
<!--/SCROLL-->

</div>
</body>
</html>
